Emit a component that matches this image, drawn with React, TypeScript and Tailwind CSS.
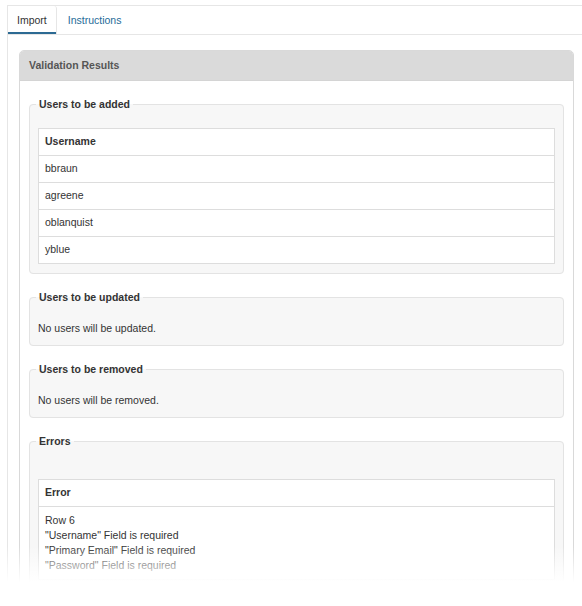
import React from "react";

const added = ["bbraun", "agreene", "oblanquist", "yblue"];

const Fieldset = ({ title, className = "", children }: { title: string; className?: string; children: React.ReactNode }) => (
  <fieldset className={`rounded-[4px] border border-[#e3e3e3] bg-[#f7f7f7] px-[8px] ${className}`}>
    <legend className="-ml-[2px] px-[3px] font-bold leading-[15px] text-[#333]">{title}</legend>
    {children}
  </fieldset>
);

const App = () => {
  return (
    <div className="relative bg-white pl-[7px] pt-[5px] font-['Liberation_Sans',Arial,sans-serif] text-[10.5px] text-[#333]">
      <div className="h-[601px] overflow-hidden border-l border-t border-[#e6e6e6]">
        {/* tabs */}
        <div className="flex h-[29px] border-b border-[#e6e6e6]">
          <div className="flex items-center rounded-tr-[3px] border-r border-[#e6e6e6] px-[9px] pt-[1px] text-[#333] shadow-[inset_0_-2px_0_#2c6a93]">
            Import
          </div>
          <div className="flex items-center px-[11px] pt-[1px] text-[#1f6b98]">Instructions</div>
        </div>

        <div className="pl-[11px] pr-[8px] pt-[15px]">
          <div className="rounded-t-[5px] border border-[#d9d9d9] bg-white">
            <div className="flex h-[30px] items-center rounded-t-[4px] border-b border-[#d4d4d4] bg-[#dadada] px-[9px] font-bold text-[#555]">
              Validation Results
            </div>
            <div className="flex flex-col gap-[16px] px-[9px] pt-[16px]">
              <Fieldset title="Users to be added" className="pb-[9px] pt-[16px]">
                <table className="w-full border-collapse border border-[#dddddd] bg-white">
                  <thead>
                    <tr>
                      <th className="h-[27px] border border-[#dddddd] px-[6px] text-left font-bold">Username</th>
                    </tr>
                  </thead>
                  <tbody>
                    {added.map((u) => (
                      <tr key={u}>
                        <td className="h-[27px] border border-[#dddddd] px-[6px]">{u}</td>
                      </tr>
                    ))}
                  </tbody>
                </table>
              </Fieldset>

              <Fieldset title="Users to be updated" className="pb-[9px] pt-[16px]">
                <p className="leading-[15px]">No users will be updated.</p>
              </Fieldset>

              <Fieldset title="Users to be removed" className="pb-[9px] pt-[16px]">
                <p className="leading-[15px]">No users will be removed.</p>
              </Fieldset>

              <Fieldset title="Errors" className="pb-[9px] pt-[30px]">
                <table className="w-full border-collapse border border-[#dddddd] bg-white">
                  <thead>
                    <tr>
                      <th className="h-[27px] border border-[#dddddd] px-[6px] text-left font-bold">Error</th>
                    </tr>
                  </thead>
                  <tbody>
                    <tr>
                      <td className="border border-[#dddddd] px-[6px] py-[6px] leading-[15px]">
                        <div>Row 6</div>
                        <div>"Username" Field is required</div>
                        <div>"Primary Email" Field is required</div>
                        <div>"Password" Field is required</div>
                      </td>
                    </tr>
                  </tbody>
                </table>
              </Fieldset>
            </div>
          </div>
        </div>
      </div>

      {/* fade-out at the bottom */}
      <div className="pointer-events-none absolute inset-x-0 bottom-0 h-[60px] bg-[linear-gradient(to_bottom,rgba(255,255,255,0)_0px,#ffffff_36px)]" />
    </div>
  );
};

export default App;
